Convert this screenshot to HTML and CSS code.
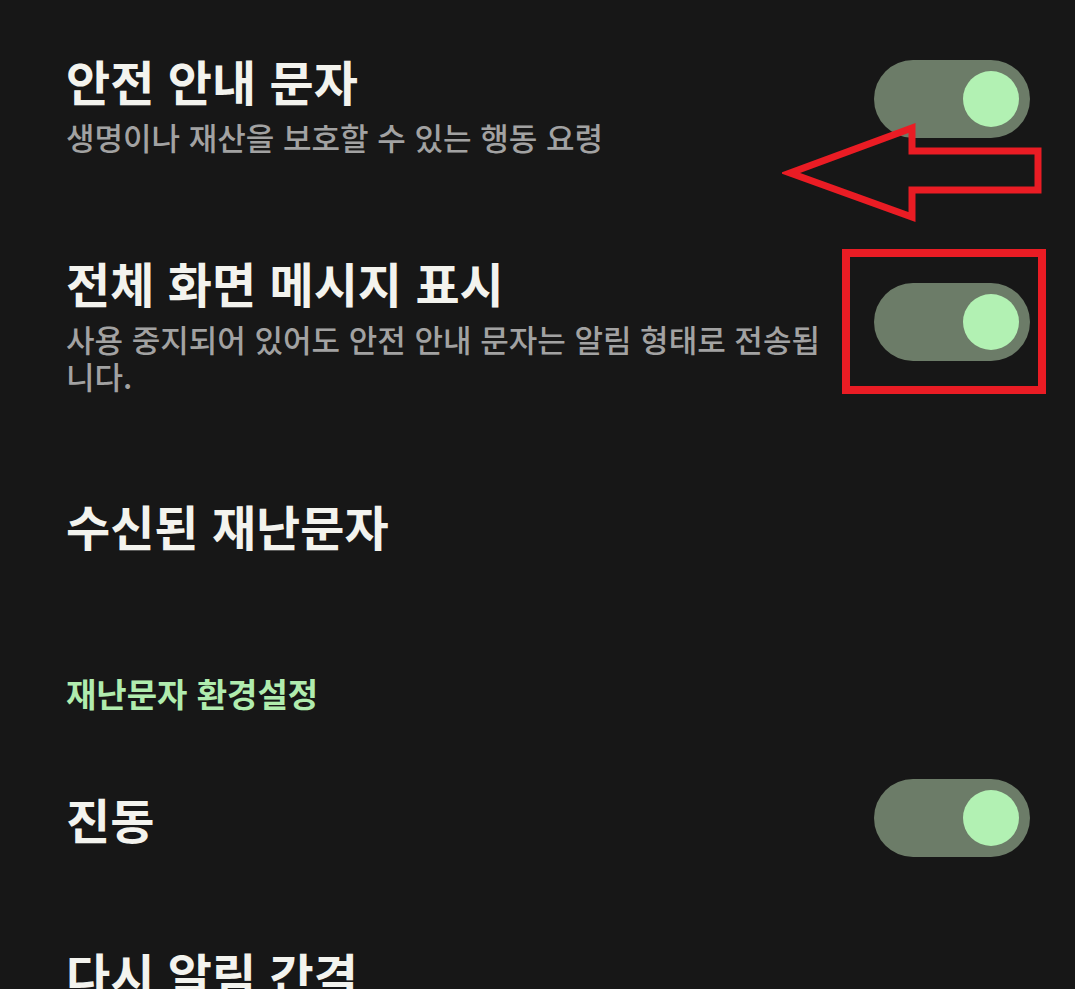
FILE: index.html
```html
<!DOCTYPE html>
<html lang="ko">
<head>
<meta charset="utf-8">
<link rel="stylesheet" href="styles.css">
</head>
<body>
<div class="screen">
  <div class="row row-first">
    <div class="text">
      <div class="title">안전 안내 문자</div>
      <div class="sub">생명이나 재산을 보호할 수 있는 행동 요령</div>
    </div>
    <div class="toggle"><span class="thumb"></span></div>
  </div>
  <div class="row row-second">
    <div class="text">
      <div class="title">전체 화면 메시지 표시</div>
      <div class="sub">사용 중지되어 있어도 안전 안내 문자는 알림 형태로 전송됩니다.</div>
    </div>
    <div class="toggle"><span class="thumb"></span></div>
  </div>
  <div class="row row-plain">
    <div class="title">수신된 재난문자</div>
  </div>
  <div class="section">재난문자 환경설정</div>
  <div class="row row-vib">
    <div class="title">진동</div>
    <div class="toggle"><span class="thumb"></span></div>
  </div>
  <div class="row row-last">
    <div class="title">다시 알림 간격</div>
  </div>

  <svg class="arrow" width="280" height="110" viewBox="0 0 280 110">
    <polygon points="8,53 130,8 130,31 256,31 256,70 130,70 130,97" fill="none" stroke="#ea1c24" stroke-width="7" stroke-linejoin="miter"/>
  </svg>
  <div class="box"></div>
</div>
</body>
</html>
```
FILE: styles.css
```css
html, body {
  margin: 0;
  padding: 0;
  background: #171717;
}
.screen {
  position: relative;
  width: 1075px;
  height: 989px;
  overflow: hidden;
  background: #171717;
  font-family: "Noto Sans CJK KR", "Noto Sans", sans-serif;
  color: #f3f3ee;
}
.row {
  display: flex;
  align-items: center;
  justify-content: space-between;
  padding: 0 45px 0 66px;
}
.text {
  display: flex;
  flex-direction: column;
  width: 770px;
}
.title {
  font-size: 48px;
  font-weight: 700;
  line-height: 56px;
  color: #f3f3ee;
}
.sub {
  margin-top: 10px;
  font-size: 31px;
  font-weight: 500;
  line-height: 37px;
  color: #a2a2a2;
}
.row-first {
  padding-top: 52px;
  align-items: flex-start;
}
.row-first .toggle { margin-top: 8px; }
.row-second {
  padding-top: 99px;
  align-items: flex-start;
}
.row-second .toggle { margin-top: 29px; }
.row-plain {
  padding-top: 103px;
}
.section {
  padding: 120px 0 0 66px;
  font-size: 33px;
  font-weight: 700;
  line-height: 40px;
  color: #b0ecae;
}
.row-vib {
  padding-top: 66px;
}
.row-last {
  padding-top: 88px;
}
.toggle {
  flex: none;
  width: 156px;
  height: 78px;
  border-radius: 39px;
  background: #6c7c68;
  display: flex;
  align-items: center;
  justify-content: flex-end;
  padding-right: 11px;
  box-sizing: border-box;
}
.thumb {
  width: 56px;
  height: 56px;
  border-radius: 50%;
  background: #b2f1b3;
}
.arrow {
  position: absolute;
  left: 782px;
  top: 120px;
}
.box {
  position: absolute;
  left: 842px;
  top: 249px;
  width: 204px;
  height: 145px;
  border: 8px solid #ea1c24;
  box-sizing: border-box;
}
```
